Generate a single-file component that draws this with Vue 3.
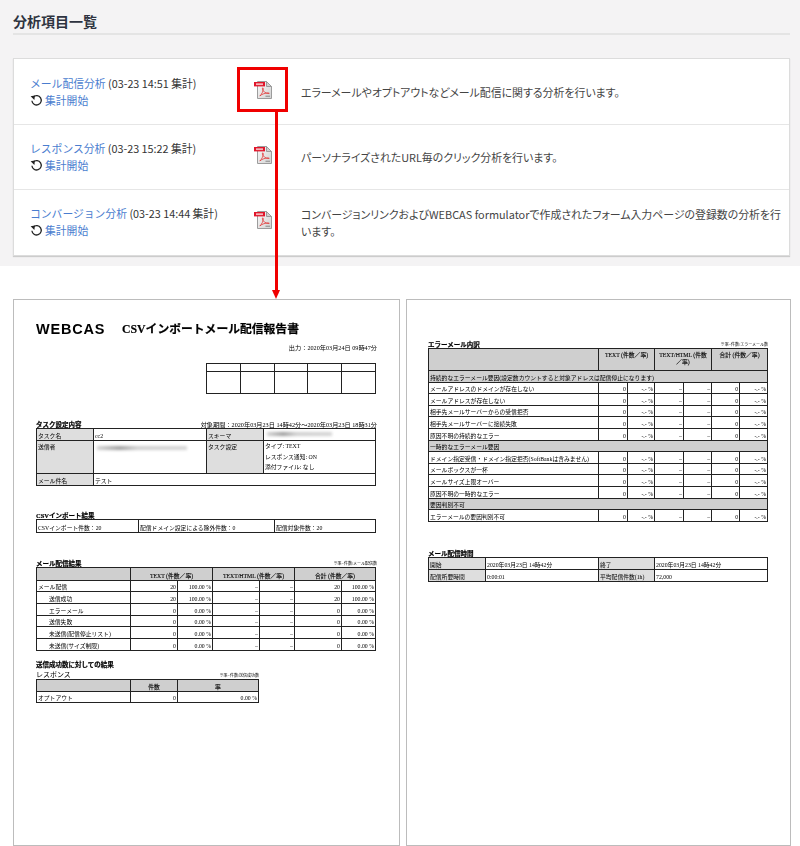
<template>
  <div class="screen">
    <section class="top">
      <h1 class="title">分析項目一覧</h1>
      <div class="card">
        <div v-for="item in items" :key="item.name" class="row">
          <div class="name-col">
            <div><a class="link">{{ item.name }}</a> ({{ item.date }} 集計)</div>
            <div class="start">
              <svg width="13" height="13" viewBox="0 0 13 13" class="reload">
                <path d="M3.3 2.9A4.7 4.7 0 1 1 1.9 6.8" fill="none" stroke="#222" stroke-width="1.3" />
                <path d="M0.6 2.2L4.9 1.6L4.4 6z" fill="#222" />
              </svg>
              <a class="link">集計開始</a>
            </div>
          </div>
          <div class="icon-col">
            <svg width="18" height="18" viewBox="0 0 18 18" class="pdf">
              <defs>
                <linearGradient id="sheet" x1="0" y1="0" x2="1" y2="1">
                  <stop offset="0" stop-color="#fafafa" />
                  <stop offset="1" stop-color="#d2d2d2" />
                </linearGradient>
              </defs>
              <path d="M3.5 0.5H12.5L17.5 5.5V17.5H3.5z" fill="url(#sheet)" stroke="#9c9c9c" />
              <path d="M12.5 0.5V5.5H17.5z" fill="#cfcfcf" stroke="#9c9c9c" />
              <rect x="0" y="1" width="11" height="4.4" fill="#e0162b" />
              <rect x="2" y="2.3" width="7" height="1.8" fill="#f5b5ba" />
              <path d="M5.8 15C8 13 9.6 9.5 9.2 7.2C9 6.4 8.3 6.8 8.4 7.8C8.8 10.3 11.5 12.6 15 12.6C15.6 12.4 15 11.8 14 11.9C11.5 12 8 13 5.8 15z" fill="none" stroke="#e23a3a" stroke-width="0.8" />
              <rect x="11.5" y="14.6" width="4.5" height="1.4" fill="#a0a0a0" />
            </svg>
          </div>
          <p class="desc">{{ item.desc }}</p>
        </div>
      </div>
    </section>

    <section class="pages">
      <div class="page">
        <div class="sheet">
          <div class="doc-head">
            <span class="logo">WEBCAS</span>
            <span class="doc-title">CSVインポートメール配信報告書</span>
          </div>
          <div class="output">出力：2020年03月24日 09時47分</div>
          <table class="rp stamp">
            <tbody>
              <tr class="h8"><td v-for="n in 5" :key="n"></td></tr>
              <tr class="h22"><td v-for="n in 5" :key="n"></td></tr>
            </tbody>
          </table>

          <div class="head-line task-head">
            <b>タスク設定内容</b>
            <span class="period">対象期間：2020年03月23日 14時42分～2020年03月23日 18時31分</span>
          </div>
          <table class="rp">
            <colgroup><col style="width:57px" /><col style="width:113px" /><col style="width:57px" /><col /></colgroup>
            <tbody>
              <tr class="h12">
                <td class="g">タスク名</td><td>cc2</td><td class="g">スキーマ</td>
                <td><span class="smudge short"></span></td>
              </tr>
              <tr class="h32">
                <td class="g top-al">送信者</td>
                <td class="top-al"><span class="smudge"></span></td>
                <td class="g top-al">タスク設定</td>
                <td class="multi">タイプ: TEXT<br />レスポンス通知: ON<br />添付ファイル: なし</td>
              </tr>
              <tr class="h12"><td class="g">メール件名</td><td colspan="3">テスト</td></tr>
            </tbody>
          </table>

          <div class="head-line csv-head"><b>CSVインポート結果</b></div>
          <table class="rp">
            <colgroup><col style="width:102px" /><col style="width:136px" /><col /></colgroup>
            <tbody>
              <tr class="h13">
                <td>CSVインポート件数：20</td><td>配信ドメイン設定による除外件数：0</td><td>配信対象件数：20</td>
              </tr>
            </tbody>
          </table>

          <div class="head-line mail-head"><b>メール配信結果</b><small>※率=件数/メール配信数</small></div>
          <table class="rp">
            <colgroup>
              <col style="width:94px" /><col style="width:47px" /><col style="width:35px" /><col style="width:47px" />
              <col style="width:35px" /><col style="width:47px" /><col />
            </colgroup>
            <tbody>
              <tr class="h13">
                <td class="gd"></td>
                <td class="gd ctr" colspan="2">TEXT (件数／率)</td>
                <td class="gd ctr" colspan="2">TEXT/HTML (件数／率)</td>
                <td class="gd ctr" colspan="2">合計 (件数／率)</td>
              </tr>
              <tr v-for="r in mailRows" :key="r.label" class="h117">
                <td :class="{ indent: r.sub }">{{ r.label }}</td>
                <td class="num">{{ r.n }}</td><td class="num">{{ r.p }}</td>
                <td class="num">–</td><td class="num">–</td>
                <td class="num">{{ r.n }}</td><td class="num">{{ r.p }}</td>
              </tr>
            </tbody>
          </table>

          <div class="head-line sent-head"><b>送信成功数に対しての結果</b></div>
          <div class="head-line resp-head resp"><span>レスポンス</span><small>※率=件数/送信成功数</small></div>
          <table class="rp resp">
            <colgroup><col style="width:94px" /><col style="width:47px" /><col /></colgroup>
            <tbody>
              <tr class="h12"><td class="gd"></td><td class="gd ctr">件数</td><td class="gd ctr">率</td></tr>
              <tr class="h11"><td>オプトアウト</td><td class="num">0</td><td class="num">0.00 %</td></tr>
            </tbody>
          </table>
        </div>
      </div>

      <div class="page page-right">
        <div class="sheet">
          <div class="head-line"><b>エラーメール内訳</b><small>※率=件数/エラーメール数</small></div>
          <table class="rp">
            <colgroup>
              <col style="width:170px" /><col style="width:29px" /><col style="width:27px" /><col style="width:29px" />
              <col style="width:28px" /><col style="width:28px" /><col />
            </colgroup>
            <tbody>
              <tr class="h22">
                <td class="gd"></td>
                <td class="gd ctr top-al" colspan="2">TEXT (件数／率)</td>
                <td class="gd ctr top-al" colspan="2">TEXT/HTML (件数<br />／率)</td>
                <td class="gd ctr top-al" colspan="2">合計 (件数／率)</td>
              </tr>
              <template v-for="r in errorRows" :key="r.label">
                <tr v-if="r.cat" class="h116"><td class="gd" colspan="7">{{ r.label }}</td></tr>
                <tr v-else class="h116">
                  <td>{{ r.label }}</td>
                  <td class="num">0</td><td class="num">-.- %</td>
                  <td class="num">–</td><td class="num">–</td>
                  <td class="num">0</td><td class="num">-.- %</td>
                </tr>
              </template>
            </tbody>
          </table>

          <div class="head-line time-head"><b>メール配信時間</b></div>
          <table class="rp">
            <colgroup><col style="width:57px" /><col style="width:113px" /><col style="width:56px" /><col /></colgroup>
            <tbody>
              <tr class="h12"><td class="g">開始</td><td>2020年03月23日 14時42分</td><td class="g">終了</td><td>2020年03月23日 14時42分</td></tr>
              <tr class="h12"><td class="g">配信所要時間</td><td>0:00:01</td><td class="g">平均配信件数(1h)</td><td>72,000</td></tr>
            </tbody>
          </table>
        </div>
      </div>
    </section>

    <!-- callout over the screenshot -->
    <div class="callout"></div>
    <div class="callout-line"></div>
    <div class="callout-head"></div>
  </div>
</template>

<script setup>
const items = [
  { name: 'メール配信分析', date: '03-23 14:51', desc: 'エラーメールやオプトアウトなどメール配信に関する分析を行います。' },
  { name: 'レスポンス分析', date: '03-23 15:22', desc: 'パーソナライズされたURL毎のクリック分析を行います。' },
  { name: 'コンバージョン分析', date: '03-23 14:44', desc: 'コンバージョンリンクおよびWEBCAS formulatorで作成されたフォーム入力ページの登録数の分析を行います。' },
]

const mailRows = [
  { label: 'メール配信', n: 20, p: '100.00 %' },
  { label: '送信成功', n: 20, p: '100.00 %', sub: true },
  { label: 'エラーメール', n: 0, p: '0.00 %', sub: true },
  { label: '送信失敗', n: 0, p: '0.00 %', sub: true },
  { label: '未送信(配信停止リスト)', n: 0, p: '0.00 %', sub: true },
  { label: '未送信(サイズ制限)', n: 0, p: '0.00 %', sub: true },
]

const errorRows = [
  { label: '持続的なエラーメール要因(設定数カウントすると対象アドレスは配信停止になります)', cat: true },
  { label: 'メールアドレスのドメインが存在しない' },
  { label: 'メールアドレスが存在しない' },
  { label: '相手先メールサーバーからの受信拒否' },
  { label: '相手先メールサーバーに接続失敗' },
  { label: '原因不明の持続的なエラー' },
  { label: '一時的なエラーメール要因', cat: true },
  { label: 'ドメイン指定受信・ドメイン指定拒否(SoftBankは含みません)' },
  { label: 'メールボックスが一杯' },
  { label: 'メールサイズ上限オーバー' },
  { label: '原因不明の一時的なエラー' },
  { label: '要因判別不可', cat: true },
  { label: 'エラーメールの要因判別不可' },
]
</script>

<style>
html, body { margin: 0; background: #fff; }
</style>

<style scoped>
.screen {
  position: relative;
  width: 800px;
  height: 846px;
  overflow: hidden;
  font-family: "Noto Sans CJK JP", "Noto Sans", sans-serif;
  color: #333;
}

.top {
  background: #f4f3f4;
  height: 266px;
  padding: 0 10px 0 13px;
  box-sizing: border-box;
}

.title {
  margin: 0;
  height: 35px;
  box-sizing: border-box;
  padding-top: 10px;
  font-size: 14px;
  line-height: 22px;
  font-weight: 700;
  color: #2e3340;
  border-bottom: 2px solid #e4e4e4;
}

.card {
  margin-top: 23px;
  background: #fff;
  border: 1px solid #dcdcdc;
  box-shadow: 0 1px 1px #ccc;
}

.row {
  display: flex;
  height: 65px;
  box-sizing: border-box;
  font-size: 10.8px;
  line-height: 17px;
  border-top: 1px solid #e6e6e6;
}
.row:first-child { border-top-color: transparent; }
.row:last-child { height: 66px; }

.name-col {
  width: 224px;
  padding: 15px 0 0 16px;
  box-sizing: border-box;
}

.link { color: #4a7dcf; }

.start { display: flex; align-items: center; gap: 2px; }
.reload { flex: none; }

.icon-col { width: 63px; padding: 21px 0 0 16px; box-sizing: border-box; }
.pdf { display: block; }

.desc {
  margin: 0;
  flex: 1;
  align-self: center;
  padding: 0 6px 0 0;
  color: #444;
  font-size: 10.9px;
  font-feature-settings: "palt";
}

.pages {
  display: flex;
  gap: 6px;
  padding: 33px 9px 0 13px;
}

.page {
  width: 387px;
  height: 547px;
  box-sizing: border-box;
  border: 1px solid #bcbcbc;
  padding: 0 22px;
  color: #000;
  font-family: "Liberation Serif", "Noto Sans CJK JP", serif;
  font-size: 5.8px;
  line-height: 7px;
}
.page-right { width: 385px; padding: 41px 22px 0 21px; }

/* the report is a scaled-down picture in the original, so it reads slightly soft */
.sheet { filter: blur(0.3px); }

.doc-head { display: flex; align-items: center; height: 14px; padding-top: 22px; }
.logo {
  font-family: "Liberation Sans", sans-serif;
  font-size: 14.5px;
  font-weight: 700;
  letter-spacing: 0.8px;
  width: 86px;
  color: #000;
}
.doc-title { font-size: 11.8px; font-weight: 700; color: #000; white-space: nowrap; -webkit-text-stroke: 0.2px #000; }

.output { text-align: right; margin-top: 8px; font-size: 6.2px; }
.period { font-size: 6.2px; }

.rp {
  width: 340px;
  table-layout: fixed;
  border-collapse: collapse;
  border: 1px solid #222;
}
.rp td {
  border: 1px solid #222;
  padding: 0 1px;
  white-space: nowrap;
  overflow: hidden;
  vertical-align: bottom;
}
.rp .g { background: #dedede; }
.rp .gd { background: #cfcfcf; }
.rp .ctr { text-align: center; -webkit-text-stroke: 0.1px #000; }
.rp .num { text-align: right; }
.rp .indent { padding-left: 12px; }
.rp .top-al { vertical-align: top; padding-top: 3px; }
.rp .multi { line-height: 10.5px; vertical-align: bottom; padding-left: 1px; }

.stamp { width: 170px; margin: 12px 0 0 170px; }

.h8 { height: 8px; }
.h11 { height: 11px; }
.h116 { height: 11.6px; }
.h117 { height: 11.7px; }
.h12 { height: 12px; }
.h13 { height: 13px; }
.h22 { height: 22px; }
.h32 { height: 32px; }

.head-line {
  display: flex;
  justify-content: space-between;
  align-items: flex-end;
  height: 7px;
}
.head-line b { font-size: 6.5px; color: #000; -webkit-text-stroke: 0.2px #000; }
.head-line small { font-size: 4px; }

.task-head { margin-top: 27px; }
.csv-head { margin-top: 26px; }
.mail-head { margin-top: 27px; }
.sent-head { margin-top: 10px; }
.resp-head { margin-top: 4px; }
.resp-head span { font-size: 7px; }
.resp { width: 223px; }
.time-head { margin-top: 28px; }

.smudge {
  display: block;
  height: 4px;
  width: 90px;
  margin: 2px 0 0 2px;
  background: linear-gradient(90deg, #d4d4d4, #9e9e9e 25%, #cfcfcf 45%, #d4d4d4);
  filter: blur(1.6px);
}
.smudge.short { width: 65px; margin-bottom: 4px; }

.callout {
  position: absolute;
  left: 237px;
  top: 67px;
  width: 51px;
  height: 45px;
  box-sizing: border-box;
  border: 3px solid #f00000;
}
.callout-line {
  position: absolute;
  left: 275px;
  top: 112px;
  width: 3px;
  height: 179px;
  background: #f00000;
}
.callout-head {
  position: absolute;
  left: 272px;
  top: 290px;
  border-left: 4.5px solid transparent;
  border-right: 4.5px solid transparent;
  border-top: 9px solid #f00000;
}
</style>
